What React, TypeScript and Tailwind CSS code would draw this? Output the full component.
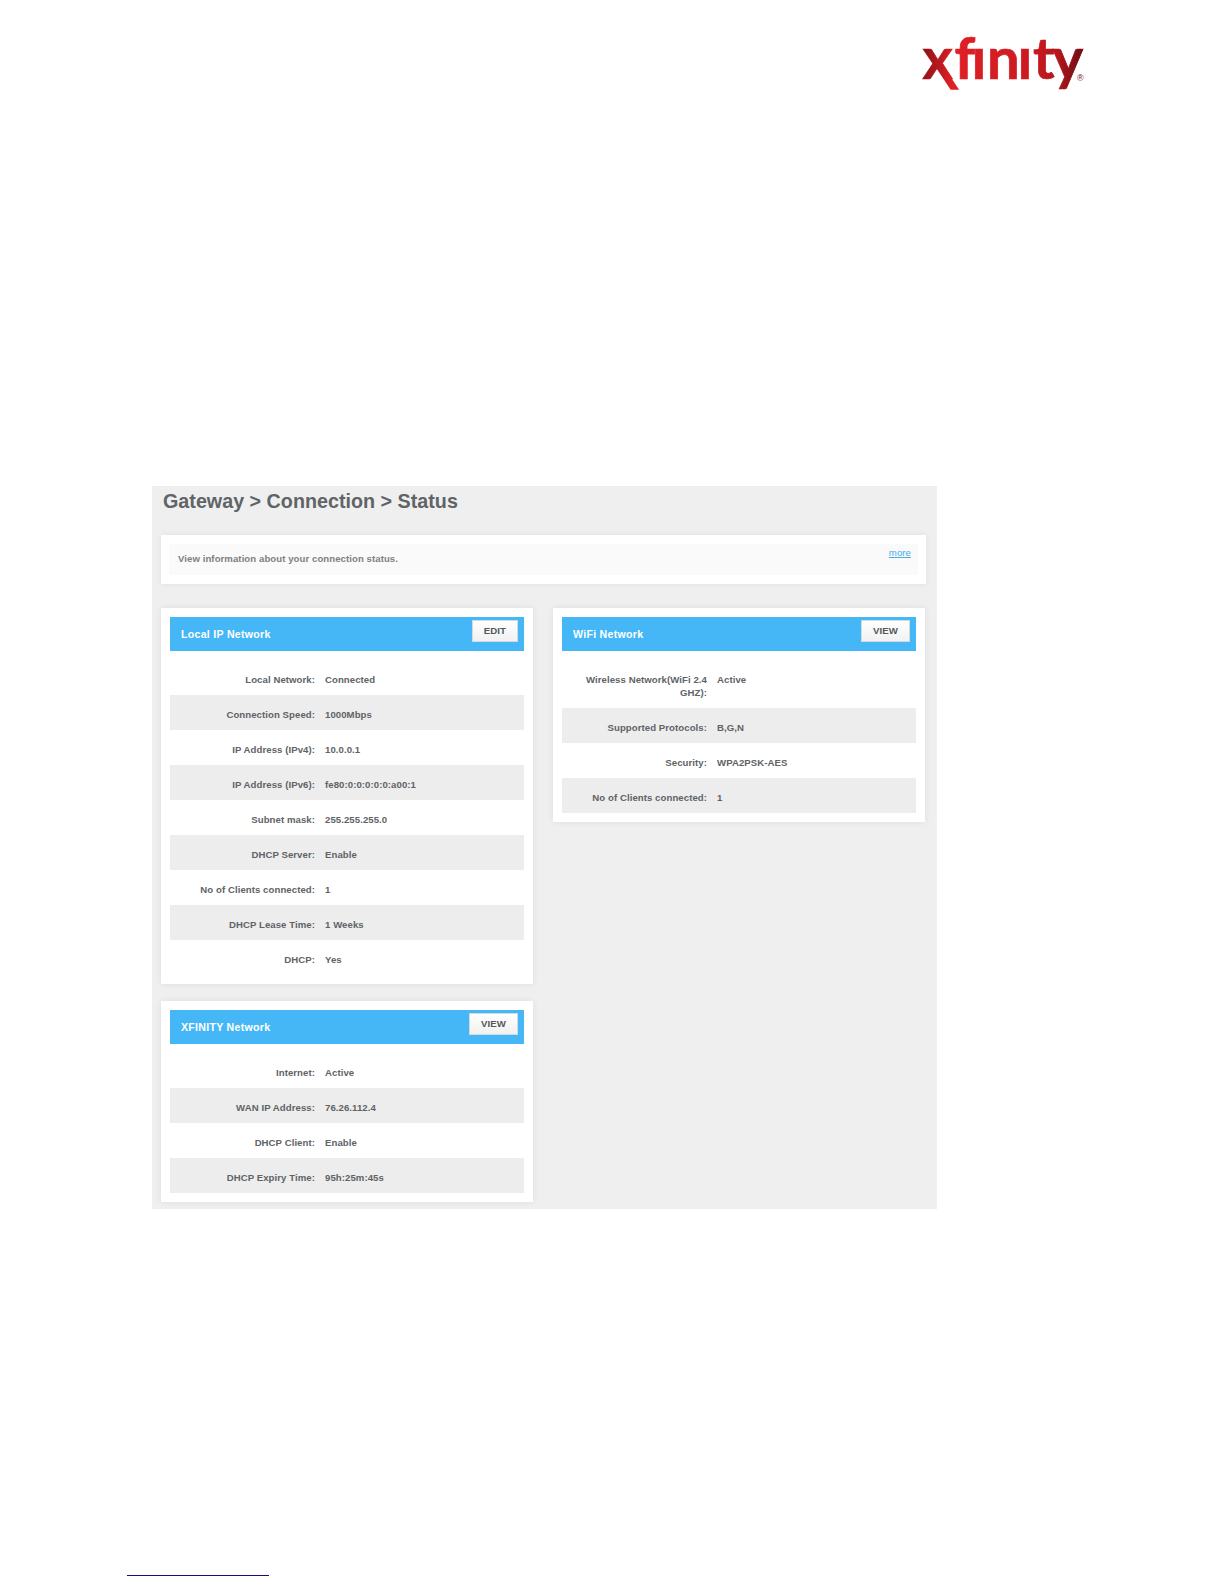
const localNetwork = [
  { label: 'Local Network:', value: 'Connected' },
  { label: 'Connection Speed:', value: '1000Mbps' },
  { label: 'IP Address (IPv4):', value: '10.0.0.1' },
  { label: 'IP Address (IPv6):', value: 'fe80:0:0:0:0:0:a00:1' },
  { label: 'Subnet mask:', value: '255.255.255.0' },
  { label: 'DHCP Server:', value: 'Enable' },
  { label: 'No of Clients connected:', value: '1' },
  { label: 'DHCP Lease Time:', value: '1 Weeks' },
  { label: 'DHCP:', value: 'Yes' },
];

const xfinityNetwork = [
  { label: 'Internet:', value: 'Active' },
  { label: 'WAN IP Address:', value: '76.26.112.4' },
  { label: 'DHCP Client:', value: 'Enable' },
  { label: 'DHCP Expiry Time:', value: '95h:25m:45s' },
];

const wifiNetwork = [
  { label: 'Wireless Network(WiFi 2.4 GHZ):', value: 'Active' },
  { label: 'Supported Protocols:', value: 'B,G,N' },
  { label: 'Security:', value: 'WPA2PSK-AES' },
  { label: 'No of Clients connected:', value: '1' },
];

type Row = { label: string; value: string };

function Logo() {
  return (
    <svg width="170" height="72" viewBox="0 0 170 72" overflow="visible" role="img" aria-label="xfinity">
      <defs>
        <linearGradient id="brand" gradientUnits="userSpaceOnUse" x1="0" y1="10" x2="166" y2="22">
          <stop offset="0" stopColor="#8a1018" />
          <stop offset="0.2" stopColor="#e01f26" />
          <stop offset="0.65" stopColor="#cc1a20" />
          <stop offset="0.82" stopColor="#b5161c" />
          <stop offset="1" stopColor="#5e0c12" />
        </linearGradient>
        <clipPath id="leg">
          <rect x="0" y="30" width="50" height="27.700" />
        </clipPath>
      </defs>
      <text
        x="0.5 32.5 49.5 65 95.5 111 130.500"
        y="47.300"
        fill="url(#brand)"
        stroke="url(#brand)"
        strokeWidth="0.7"
        className="font-['Lato',sans-serif] text-[58px] font-bold [font-variant-ligatures:none]"
      >
        xfınıty
      </text>
      <line x1="16" y1="32.200" x2="37" y2="64" stroke="url(#brand)" strokeWidth="7" clipPath="url(#leg)" />
      <text x="155" y="48.500" fill="#7d1016" className="font-['Liberation_Sans',sans-serif] text-[9px]">
        ®
      </text>
    </svg>
  );
}

function Card({ title, action, rows }: { title: string; action: string; rows: Row[] }) {
  return (
    <section className="bg-white p-[9px] shadow-[0_0_7px_rgba(0,0,0,0.07)]">
      <div className="flex h-[34px] items-start justify-between bg-[#45b7f6] pt-[3px] pr-[6px] pl-[11px]">
        <h2 className="pt-[7px] text-[10.6px] leading-[14px] font-bold tracking-[0.28px] text-white">{title}</h2>
        <button className="h-[22px] border border-[#d3dadd] bg-gradient-to-b from-white to-[#f1f1f1] px-[11px] text-[9.7px] leading-[18px] font-bold text-[#55585a]">
          {action}
        </button>
      </div>
      <dl className="pt-[9px]">
        {rows.map((row) => (
          <div key={row.label} className="flex min-h-[35px] pt-[13px] pb-[9px] leading-[13px] even:bg-[#ededed]">
            <dt className="w-[145px] shrink-0 pl-4 text-right">{row.label}</dt>
            <dd className="pl-[10px]">{row.value}</dd>
          </div>
        ))}
      </dl>
    </section>
  );
}

export default function App() {
  return (
    <div className="flex h-[1584px] w-[1224px] flex-col bg-white font-['Liberation_Sans',Arial,sans-serif]">
      <header className="flex h-[486px] justify-end pt-[32px] pr-[132px]">
        <Logo />
      </header>

      <main className="ml-[152px] h-[723px] w-[785px] bg-[#efefef] pl-[9px] text-[9.6px] font-bold tracking-[0.07px] text-[#606366]">
        <h1 className="pt-[3px] pl-[2px] text-[19.7px] leading-6 font-bold tracking-[0.02px] text-[#5f6467]">
          Gateway &gt; Connection &gt; Status
        </h1>

        <div className="mt-[22px] h-[49px] w-[765px] bg-white px-2 py-[9px] shadow-[0_0_6px_rgba(0,0,0,0.07)]">
          <div className="flex h-[31px] justify-between bg-[#fafafa] pr-[7px] pl-[9px] text-[#808080]">
            <p className="pt-2 leading-[14px]">View information about your connection status.</p>
            <a href="#" className="pt-[2px] leading-[14px] font-normal text-[#45aee8] underline">
              more
            </a>
          </div>
        </div>

        <div className="mt-[24px] flex items-start gap-5">
          <div className="flex w-[372px] flex-col gap-[17px]">
            <Card title="Local IP Network" action="EDIT" rows={localNetwork} />
            <Card title="XFINITY Network" action="VIEW" rows={xfinityNetwork} />
          </div>
          <div className="w-[372px]">
            <Card title="WiFi Network" action="VIEW" rows={wifiNetwork} />
          </div>
        </div>
      </main>

      <footer className="mt-auto pb-2 pl-[127px]">
        <div className="h-px w-[142px] bg-[#12127c]" />
      </footer>
    </div>
  );
}
